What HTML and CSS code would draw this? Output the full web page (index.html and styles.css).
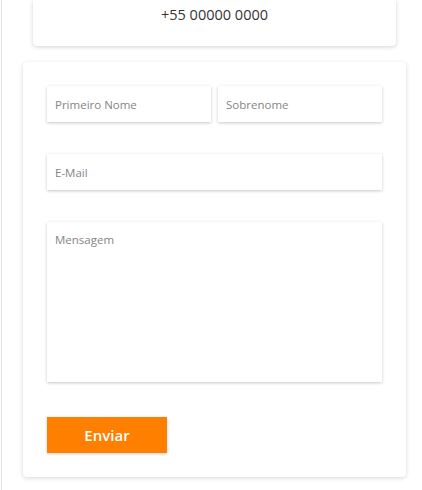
FILE: index.html
```html
<!DOCTYPE html>
<html lang="pt">
<head>
<meta charset="utf-8">
<title>Contato</title>
<link rel="stylesheet" href="styles.css">
</head>
<body>
<div class="page">
  <div class="info-card">
    <p class="phone">+55 00000 0000</p>
  </div>
  <form class="form-card">
    <div class="row">
      <input class="field" type="text" placeholder="Primeiro Nome">
      <input class="field" type="text" placeholder="Sobrenome">
    </div>
    <input class="field" type="email" placeholder="E-Mail">
    <textarea class="field message" placeholder="Mensagem"></textarea>
    <div class="actions">
      <button class="send" type="button">Enviar</button>
    </div>
  </form>
</div>
</body>
</html>
```

FILE: styles.css
```css
* { box-sizing: border-box; }
html, body { margin: 0; padding: 0; background: #fff; }
body {
  font-family: "Open Sans", "Noto Sans", sans-serif;
  color: #333;
}
.page {
  margin-left: 1px;
  border-left: 1px solid #e4e4e4;
  padding: 0 16px 0 21px;
  min-height: 100vh;
  display: flex;
  flex-direction: column;
  gap: 16px;
}
.info-card {
  margin: 0 10px;
  background: #fff;
  border-radius: 0 0 4px 4px;
  box-shadow: 0 1px 4px rgba(0,0,0,0.18);
  padding: 5px 0 21px;
  text-align: center;
}
.phone {
  margin: 0;
  font-size: 14.5px;
  line-height: 20px;
  color: #333;
}
.form-card {
  background: #fff;
  border-radius: 4px;
  box-shadow: 0 1px 4px rgba(0,0,0,0.16);
  padding: 24px;
  display: flex;
  flex-direction: column;
  gap: 32px;
}
.row {
  display: grid;
  grid-template-columns: 1fr 1fr;
  gap: 7px;
}
.field {
  display: block;
  width: 100%;
  height: 36px;
  border: none;
  outline: none;
  background: #fff;
  box-shadow: 0 1px 3px rgba(0,0,0,0.22);
  font-family: "Open Sans", "Noto Sans", sans-serif;
  font-size: 11.5px;
  color: #333;
  padding: 0 8px;
}
.field::placeholder { color: #858585; }
.message {
  height: 160px;
  resize: none;
  padding: 10px 8px;
  line-height: 16px;
}
.actions { margin-top: 3px; }
.send {
  width: 120px;
  height: 36px;
  border: none;
  background: #ff7f00;
  color: #fff;
  font-family: "Open Sans", "Noto Sans", sans-serif;
  font-size: 15px;
  font-weight: 600;
  box-shadow: 0 1px 3px rgba(0,0,0,0.2);
  padding: 0;
}
```
